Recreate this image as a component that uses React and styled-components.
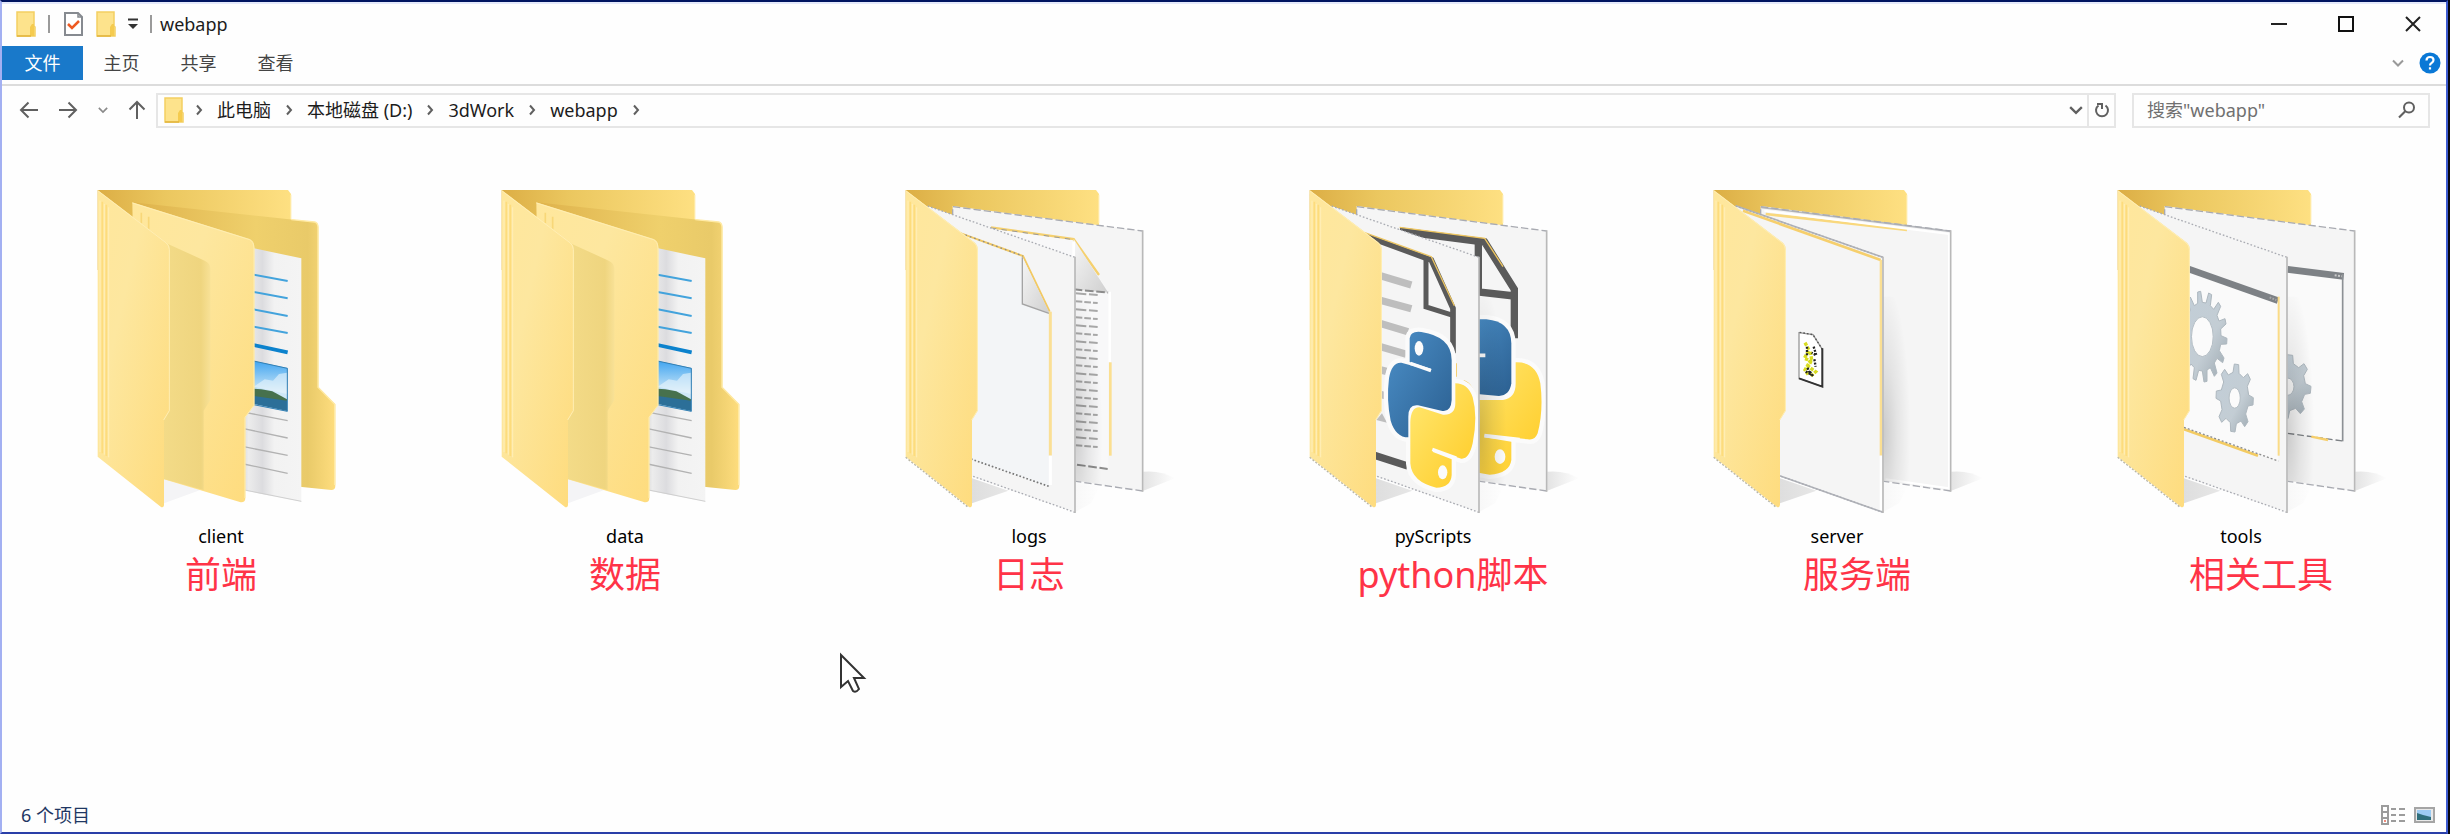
import React from "react";
import styled, { createGlobalStyle } from "styled-components";

const GlobalStyle = createGlobalStyle`
  * { box-sizing: border-box; }
  body { margin: 0; background: #fff; }
  body, button, input {
    font-family: "Noto Sans", "Noto Sans CJK SC", sans-serif;
    font-size: 18px;
    line-height: 24px;
    color: #1c1c1c;
  }
  button { border: 0; padding: 0; background: none; cursor: default; }
  a { color: inherit; text-decoration: none; }
  svg { display: block; flex: none; }
`;

const Desktop = styled.div`
  background: #05050f;
  padding-right: 2px;
`;

const Window = styled.main`
  position: relative;
  display: flex;
  flex-direction: column;
  min-height: 100vh;
  background: #fefefe;
  border-style: solid;
  border-width: 2px;
  border-color: #001460 #3d5bd0 #2a3fa8 #a3b0f2;
`;

const TitleBar = styled.header`
  display: flex;
  align-items: center;
  height: 44px;
  padding: 0 0 2px 14px;
  border-top: 2px solid #e4e9fb;
`;

const QuickTools = styled.div`
  display: flex;
  align-items: center;
  gap: 12px;
`;

const Separator = styled.span`
  width: 2px;
  height: 18px;
  margin-right: 2px;
  background: #9a9a9a;
`;

const Title = styled.h1`
  margin: 0 0 0 6px;
  font-size: 18px;
  font-weight: 400;
  line-height: 24px;
`;

const WindowButtons = styled.div`
  display: flex;
  margin-left: auto;
`;

const WindowButton = styled.button`
  display: flex;
  align-items: center;
  justify-content: center;
  width: 67px;
  height: 40px;
`;

const Ribbon = styled.nav`
  display: flex;
  align-items: center;
  height: 40px;
  padding-bottom: 4px;
  padding-right: 5px;
  border-bottom: 2px solid #dcdcdc;
`;

const Tab = styled.button`
  height: 34px;
  width: ${(p) => (p.$active ? 81 : 77)}px;
  color: ${(p) => (p.$active ? "#fff" : "#444")};
  background: ${(p) => (p.$active ? "#1979ca" : "transparent")};
`;

const RibbonTools = styled.div`
  display: flex;
  align-items: center;
  gap: 15px;
  margin-left: auto;
`;

const AddressRow = styled.div`
  display: flex;
  align-items: center;
  height: 48px;
  padding: 0 16px 0 17px;
`;

const Arrows = styled.div`
  display: flex;
  align-items: center;
  justify-content: space-between;
  width: 128px;
  margin-right: 9px;
`;

const AddressBox = styled.div`
  display: flex;
  flex: 1;
  align-items: center;
  height: 35px;
  padding-left: 6px;
  border: 2px solid #e6e6e6;
`;

const Crumbs = styled.ol`
  display: flex;
  align-items: center;
  flex: 1;
  gap: 12px;
  margin: 0;
  padding: 0 0 0 9px;
  list-style: none;
`;

const Crumb = styled.li`
  display: flex;
  align-items: center;
  gap: 12px;
`;

const RefreshButton = styled.button`
  display: flex;
  align-items: center;
  justify-content: center;
  width: 27px;
  height: 31px;
  margin-left: 4px;
  border-left: 2px solid #e6e6e6;
`;

const SearchBox = styled.label`
  display: flex;
  align-items: center;
  width: 298px;
  height: 35px;
  margin-left: 16px;
  padding: 0 12px 0 13px;
  border: 2px solid #e6e6e6;
`;

const SearchInput = styled.input`
  flex: 1;
  min-width: 0;
  padding: 0;
  border: 0;
  outline: 0;
  background: none;
  &::placeholder { color: #707070; opacity: 1; }
`;

const Files = styled.ul`
  display: grid;
  grid-template-columns: repeat(auto-fill, minmax(400px, 1fr));
  align-content: start;
  flex: 1;
  margin: 0;
  padding: 46px 3px 0 17px;
  list-style: none;
`;

const FileItem = styled.li`
  text-align: center;
`;

const FileLink = styled.a`
  display: flex;
  flex-direction: column;
  align-items: center;
  line-height: 22px;
  color: #000;
`;

const Note = styled.p`
  margin: 0;
  padding-left: ${(p) => (p.$aside ? 40 : 0)}px;
  font-size: 36px;
  line-height: 56px;
  color: #ff3347;
`;

const StatusBar = styled.footer`
  display: flex;
  align-items: center;
  justify-content: space-between;
  height: 34px;
  padding: 0 10px 0 19px;
  color: #1f3763;
`;

const ViewButtons = styled.div`
  display: flex;
  gap: 9px;
`;

const Pointer = styled.svg`
  position: absolute;
  left: 837px;
  top: 650px;
`;

const SmallFolder = () => (
  <svg width="20" height="26" viewBox="0 0 20 26">
    <path d="M1 1h17v14l1 1v9H1z" fill="#fde38c" stroke="#f3cf62" strokeWidth="1.5" />
    <path d="M14 25v-9l2-3h2v12z" fill="#f5cb4f" />
    <path d="M1 25h14" stroke="#e2b43c" strokeWidth="1.5" />
  </svg>
);

const CheckedPage = () => (
  <svg width="20" height="26" viewBox="0 0 20 26">
    <path d="M1 2h13l4 4v18H1z" fill="#fff" stroke="#868a90" strokeWidth="2" />
    <path d="M14 2v4h4" fill="none" stroke="#868a90" strokeWidth="1.5" />
    <path d="M4 13l4 4 7-7" fill="none" stroke="#ee5a22" strokeWidth="2.5" />
  </svg>
);

const Chevron = ({ dir = "right", color = "#606060", w = 2, size = 12 }) => (
  <svg width={size} height={size} viewBox="0 0 12 12">
    <path
      d={dir === "right" ? "M4 1.5l4 4.5-4 4.5" : "M1 3.5l5 5 5-5"}
      fill="none"
      stroke={color}
      strokeWidth={w}
    />
  </svg>
);

const Arrow = ({ turn = 0, color = "#606060" }) => (
  <svg width="20" height="20" viewBox="0 0 20 20">
    <path
      d="M19 10H2M9.500 2.500L2 10l7.500 7.500"
      fill="none"
      stroke={color}
      strokeWidth="2"
      transform={`rotate(${turn} 10 10)`}
    />
  </svg>
);

const Gradients = () => (
  <svg width="0" height="0" style={{ position: "absolute" }} aria-hidden="true">
    <defs>
      <linearGradient id="front" x1="0" y1="0" x2="1" y2="1">
        <stop offset="0" stopColor="#ffe79c" />
        <stop offset=".35" stopColor="#fde79f" />
        <stop offset="1" stopColor="#fedb7c" />
      </linearGradient>
      <linearGradient id="back" x1="0" y1="0" x2="1" y2="0">
        <stop offset="0" stopColor="#dcae45" />
        <stop offset=".35" stopColor="#ebc75f" />
        <stop offset="1" stopColor="#fee082" />
      </linearGradient>
      <linearGradient id="back2" gradientUnits="userSpaceOnUse" x1="200" y1="0" x2="797" y2="0">
        <stop offset="0" stopColor="#dfb34c" />
        <stop offset=".6" stopColor="#efd06c" />
        <stop offset=".86" stopColor="#e9ca69" />
        <stop offset="1" stopColor="#fedd7e" />
      </linearGradient>
      <linearGradient id="shade" x1="0" y1="0" x2="1" y2="0">
        <stop offset="0" stopColor="#f3db88" />
        <stop offset=".8" stopColor="#efd57f" />
        <stop offset="1" stopColor="#f8e196" />
      </linearGradient>
      <linearGradient id="sheet" x1="0" y1="0" x2="1" y2="0">
        <stop offset="0" stopColor="#d6d6d6" />
        <stop offset=".12" stopColor="#ececec" />
        <stop offset=".35" stopColor="#dcdcdf" />
        <stop offset=".55" stopColor="#f2f2f2" />
        <stop offset="1" stopColor="#f4f4f4" />
      </linearGradient>
      <linearGradient id="fall" x1="0" y1="0" x2="1" y2="0">
        <stop offset="0" stopColor="#c9c9c9" />
        <stop offset="1" stopColor="#c9c9c9" stopOpacity="0" />
      </linearGradient>
      <radialGradient id="crease" cx="0" cy=".72" r=".8">
        <stop offset="0" stopColor="#000" stopOpacity=".17" />
        <stop offset=".5" stopColor="#000" stopOpacity=".07" />
        <stop offset="1" stopColor="#000" stopOpacity="0" />
      </radialGradient>
      <linearGradient id="curl" x1="0" y1="0" x2="1" y2="1">
        <stop offset="0" stopColor="#f6f6f6" />
        <stop offset="1" stopColor="#cfcfcf" />
      </linearGradient>
      <linearGradient id="sky" x1="0" y1="0" x2="0" y2="1">
        <stop offset="0" stopColor="#3fa4f0" />
        <stop offset=".6" stopColor="#cfe8f7" />
      </linearGradient>
      <linearGradient id="pyBlue" x1="0" y1="0" x2="1" y2="1">
        <stop offset="0" stopColor="#4b8fc8" />
        <stop offset="1" stopColor="#2b5f90" />
      </linearGradient>
      <linearGradient id="pyYellow" x1="0" y1="0" x2="1" y2="1">
        <stop offset="0" stopColor="#ffe873" />
        <stop offset="1" stopColor="#ffcb25" />
      </linearGradient>
      <linearGradient id="gear" x1="0" y1="0" x2="1" y2="1">
        <stop offset="0" stopColor="#c2ced8" />
        <stop offset=".6" stopColor="#c3cdd4" />
        <stop offset="1" stopColor="#9aa6ae" />
      </linearGradient>
    </defs>
  </svg>
);

const FrontCover = () => (
  <g>
    <path
      d="M84 60L290 217q10 8 10 20V722L283 750V1004q0 8-8 8L84 860z"
      fill="url(#front)"
    />
    <path d="M84 62L290 219q9 8 9 20V722L282 750" fill="none" stroke="#ffeeb4" strokeWidth="3" />
    <path d="M98 95V850M110 104V858" stroke="#fddc7c" strokeWidth="5" />
    <path d="M91 92V846M104 102V854M117 112V862" stroke="#ffefb8" strokeWidth="3" />
  </g>
);

const BackCover = () => (
  <g>
    <path d="M84 60H655L664 72V300H84z" fill="url(#back)" />
    <path d="M663 74V160" stroke="#ffe9a2" strokeWidth="4" />
  </g>
);

const FilledFolder = () => (
  <g>
    <BackCover />
    <path d="M188 97L735 156q11 3 11 16V652L797 703V948q0 12-12 12L690 950L300 880z" fill="url(#back2)" />
    <path d="M665 149L735 156q10 3 10 16V652L795 703V945" fill="none" stroke="#ffeaa4" strokeWidth="4" />
    <path d="M540 232L695 265V995L515 960z" fill="url(#sheet)" />
    <path d="M525 960L695 994" stroke="#cfcfcf" strokeWidth="3" />
    <path d="M552 314L654 333M552 366L654 385M552 418L654 438M552 470L654 489" stroke="#43a3dc" strokeWidth="6" />
    <path d="M552 525L654 547" stroke="#0c82cd" strokeWidth="11" />
    <path d="M530 728L654 752M522 776L654 804M522 830L654 856M522 882L654 910" stroke="#b2b2b2" strokeWidth="4" />
    <path d="M550 572L654 594V725L550 704z" fill="url(#sky)" />
    <path d="M552 650L585 628L610 632L628 612L652 608V672z" fill="#eaf5fb" opacity=".6" />
    <path d="M552 656L575 658L608 664L652 688V700H552z" fill="#47714d" />
    <path d="M552 678L652 692V723L552 702z" fill="#2c6f98" />
    <path d="M552 573L653 595V724L552 704" fill="none" stroke="#337fb2" strokeWidth="3" />
    <path d="M283 920L392 960L283 1000z" fill="#f4f4f6" />
    <path d="M188 97L540 207q14 5 14 25V706L527 742V984q0 14-14 13L270 924L200 800z" fill="url(#front)" />
    <path d="M188 99L540 209q12 5 13 25V706L526 742V984" fill="none" stroke="#ffeeb2" strokeWidth="3" />
    <path d="M215 128V160M237 140V180" stroke="#f8d778" strokeWidth="5" />
    <path d="M280 215L405 272q17 8 17 24V690L402 722V960L280 926z" fill="url(#shade)" />
    <FrontCover />
  </g>
);

const Leaf = ({ front, children }) => (
  <g>
    <path
      d={front ? "M150 108L592 262V1027L180 885z" : "M225 108L795 183V963L400 906V300L225 240z"}
      fill="#f5f5f5"
    />
    {children}
    <path
      d={front ? "M150 108L592 262M592 1027L270 913" : "M225 140V110L795 183M795 963L594 934"}
      fill="none"
      stroke="#a9abb2"
      strokeWidth="4"
      strokeDasharray={front ? "5 6" : "22 9"}
    />
    <path d={front ? "M592 260V1029" : "M795 181V965"} stroke="#b9b9b9" strokeWidth="5" />
  </g>
);

const LeafFolder = ({ rear, front, edge }) => (
  <g>
    <path d="M797 905Q850 900 892 925L797 962z" fill="url(#fall)" opacity=".5" />
    <path d="M594 940H670L640 1000L594 1025zM283 925L392 962L283 1000z" fill="url(#fall)" opacity=".6" />
    <BackCover />
    <Leaf>{rear}</Leaf>
    <path d="M594 380H694V946L594 932z" fill="url(#crease)" />
    <Leaf front>{front}</Leaf>
    {edge}
    <FrontCover />
    <path d="M84 862L272 1012" stroke="#b9b6a5" strokeWidth="4" strokeDasharray="6 5" />
  </g>
);

const textRows = Array.from({ length: 20 }, (_, i) => 370 + i * 24);

const LogsFolder = () => (
  <LeafFolder
    rear={
      <g>
        <path d="M340 172L588 207L692 365V897L590 884z" fill="#f8f8f9" />
        <path d="M340 172L588 207L664 315" fill="none" stroke="#f5d06e" strokeWidth="7" />
        <path d="M340 174L588 209" stroke="#9a9a9a" strokeWidth="3" strokeDasharray="16 16" />
        <path d="M588 207V358L692 368z" fill="url(#curl)" />
        <path d="M588 358L692 368M598 884L690 897" stroke="#8c8c8c" strokeWidth="6" strokeDasharray="26 8" />
        <path d="M588 215V355M696 365V577" stroke="#fff" strokeWidth="8" />
        <path d="M698 577V857" stroke="#fbdf90" strokeWidth="8" />
        {textRows.map((y, i) => (
          <path key={y} d={`M594 ${y}L660 ${y + 5}`} stroke="#a8a8a8" strokeWidth="6" strokeDasharray={i % 2 ? "20 6" : "32 8"} />
        ))}
      </g>
    }
    front={
      <g>
        <path d="M250 190L436 258L516 425V950L270 864z" fill="#f3f5f7" />
        <path d="M250 190L436 258L516 425" fill="none" stroke="#f2c963" strokeWidth="6" />
        <path d="M250 190L436 258" stroke="#8b8b8b" strokeWidth="4" strokeDasharray="5 9" />
        <path d="M434 260V402L516 430z" fill="url(#curl)" />
        <path d="M434 262V402L514 430" fill="none" stroke="#a4a4a4" strokeWidth="4" />
        <path d="M518 425V857" stroke="#fadf95" strokeWidth="9" />
        <path d="M518 857V945" stroke="#fff" strokeWidth="9" />
        <path d="M280 867L516 950" stroke="#777" strokeWidth="5" strokeDasharray="5 6" />
      </g>
    }
  />
);

const PY_BLUE =
  "M360 505Q362 482 395 486Q486 500 486 570V690Q484 728 455 722L385 706Q356 702 356 740V802Q318 802 303 752Q290 690 298 625Q306 576 335 578L424 602V596L360 576z";
const PY_YELLOW =
  "M497 640Q535 640 549 682Q565 740 549 820Q538 868 515 866L430 838V846L486 868V915Q484 952 440 953Q366 936 362 880V756Q364 710 390 712L460 734Q497 736 497 700z";
const PY_BLUE_REAR = "M520 448H590Q664 455 665 520V640Q660 676 628 678L520 668z";
const PY_YELLOW_REAR =
  "M678 577Q740 575 752 640Q762 720 744 790Q735 812 715 808L585 794V802L665 815V870Q660 910 600 914L520 900V690H640Q678 685 678 640z";

const PythonMark = () => (
  <g strokeLinejoin="round">
    <g fill="#fbfbfb" stroke="#fbfbfb" strokeWidth="26">
      <path d={PY_BLUE} />
      <path d={PY_YELLOW} />
    </g>
    <path d={PY_BLUE} fill="url(#pyBlue)" />
    <path d={PY_YELLOW} fill="url(#pyYellow)" />
    <path d="M362 580L424 602" stroke="#fbfbfb" strokeWidth="10" />
    <path d="M428 838L500 864" stroke="#fbfbfb" strokeWidth="10" />
    <ellipse cx="388" cy="535" rx="13" ry="22" fill="#fbfbfb" />
    <ellipse cx="459" cy="907" rx="14" ry="21" fill="#fbfbfb" />
  </g>
);

const PythonFolder = () => (
  <LeafFolder
    rear={
      <g transform="translate(24 0)">
        <path d="M330 183L585 216L674 358V505" fill="none" stroke="#5a5a5a" strokeWidth="22" />
        <path d="M330 172L585 205L640 290" fill="none" stroke="#f0c75f" strokeWidth="4" />
        <path d="M566 215V366L674 378" fill="none" stroke="#5a5a5a" strokeWidth="22" />
        <g strokeLinejoin="round">
          <g fill="#fbfbfb" stroke="#fbfbfb" strokeWidth="26">
            <path d={PY_BLUE_REAR} />
            <path d={PY_YELLOW_REAR} />
          </g>
          <path d={PY_BLUE_REAR} fill="url(#pyBlue)" />
          <path d={PY_YELLOW_REAR} fill="url(#pyYellow)" />
        </g>
        <path d="M560 556H587M584 797L690 809" stroke="#fbfbfb" strokeWidth="11" />
        <ellipse cx="631" cy="860" rx="16" ry="22" fill="#fbfbfb" />
      </g>
    }
    front={
      <g transform="translate(24 0)">
        <path d="M225 197L425 270L490 415V550" fill="none" stroke="#5a5a5a" strokeWidth="17" />
        <path d="M225 188L425 260L494 407" fill="none" stroke="#ecc562" strokeWidth="4" />
        <path d="M409 265V411L490 436" fill="none" stroke="#5a5a5a" strokeWidth="15" />
        <path d="M255 312L365 345M255 386L365 416M255 455L355 485M255 525L350 553M255 595L290 604M255 668L290 678" stroke="#bebebe" strokeWidth="22" />
        <path d="M260 750L277 730L292 758z" fill="#bebebe" />
        <path d="M240 851L354 888" stroke="#5a5a5a" strokeWidth="22" />
        <path d="M500 580V620M522 632Q548 640 560 690" fill="none" stroke="#f4d073" strokeWidth="4" />
        <PythonMark />
      </g>
    }
  />
);

const ServerFolder = () => (
  <LeafFolder
    rear={
      <g>
        <path d="M240 132L664 180" stroke="#f9d87d" strokeWidth="8" />
        <path d="M236 122L790 192V955L600 928" fill="none" stroke="#fff" strokeWidth="6" />
        <path d="M225 112L795 184" stroke="#b6b8bd" strokeWidth="5" />
      </g>
    }
    front={
      <g transform="translate(12 0)">
        <path d="M160 122L573 270" stroke="#f6cf6c" strokeWidth="8" />
        <path d="M574 270V857" stroke="#fbdf92" strokeWidth="8" />
        <path d="M574 857V1020" stroke="#fff" strokeWidth="8" />
        <path d="M138 107L580 262M270 917L580 1027" stroke="#b2b4ba" strokeWidth="5" />
        <path d="M328 488L370 494L398 538V650L328 625z" fill="#fff" stroke="#9a9a9a" strokeWidth="4" />
        <path d="M330 487L370 494L398 538" fill="none" stroke="#555" strokeWidth="4" strokeDasharray="5 6" />
        <path d="M398 535V650L328 625" fill="none" stroke="#333" strokeWidth="6" />
        <path d="M346 518L358 540L344 565L362 572L346 600L356 615M362 545L366 570L356 590L378 605L362 620" fill="none" stroke="#d8dc20" strokeWidth="10" strokeDasharray="10 4" />
        <path d="M372 530L380 556L366 548M374 568L378 590M348 605L362 612L352 590M370 618L360 604M352 530V560" fill="none" stroke="#222" strokeWidth="7" strokeDasharray="6 4" />
      </g>
    }
  />
);

const gearPath = (cx, cy, rx, ry, teeth) => {
  const point = (a, k) => `${Math.round(cx + Math.cos(a) * rx * k)} ${Math.round(cy + Math.sin(a) * ry * k)}`;
  const step = (Math.PI * 2) / teeth;
  const parts = [];
  for (let i = 0; i < teeth; i += 1) {
    const a = i * step + 0.1;
    parts.push(point(a - step * 0.28, 0.76), point(a - step * 0.14, 1), point(a + step * 0.14, 1), point(a + step * 0.28, 0.76));
  }
  return `M${parts.join("L")}z`;
};

const Gear = ({ cx, cy, rx, ry, teeth, hole }) => (
  <g>
    <path d={gearPath(cx, cy, rx, ry, teeth)} fill="url(#gear)" stroke="#aeb8bf" strokeWidth="3" strokeLinejoin="round" />
    <ellipse cx={cx} cy={cy} rx={rx * hole} ry={ry * hole} fill="#fbfbfb" stroke="#b4bec5" strokeWidth="3" />
  </g>
);

const ToolsFolder = () => (
  <LeafFolder
    rear={
      <g>
        <path d="M500 280L760 310V814L500 780z" fill="#fafafa" />
        <path d="M594 298L762 319" stroke="#7d8185" strokeWidth="20" />
        <path d="M735 316L757 319" stroke="#c9c9c9" strokeWidth="6" strokeDasharray="6 4" />
        <path d="M759 312V814" stroke="#8c9094" strokeWidth="5" />
        <path d="M594 790L759 813" stroke="#7d8185" strokeWidth="4" strokeDasharray="20 9" />
        <path d="M665 800L715 810" stroke="#f6cf6c" strokeWidth="7" />
        <Gear cx={594} cy={650} rx={70} ry={96} teeth={8} hole={0.27} />
      </g>
    }
    front={
      <g>
        <path d="M260 285L566 385V872L260 770z" fill="#fafafa" />
        <path d="M285 293L565 392" stroke="#7d8185" strokeWidth="20" />
        <path d="M540 382L560 390" stroke="#a9a9a9" strokeWidth="6" strokeDasharray="5 4" />
        <path d="M567 380V857" stroke="#fadb86" strokeWidth="6" />
        <path d="M283 778L505 857" stroke="#f3cb62" strokeWidth="8" />
        <path d="M283 772L566 873" stroke="#8d8d8d" strokeWidth="4" strokeDasharray="6 6" />
        <Gear cx={338} cy={500} rx={74} ry={136} teeth={14} hole={0.44} />
        <Gear cx={435} cy={684} rx={56} ry={102} teeth={8} hole={0.3} />
      </g>
    }
  />
);

const folders = [
  { name: "client", note: "前端", Art: FilledFolder },
  { name: "data", note: "数据", Art: FilledFolder },
  { name: "logs", note: "日志", Art: LogsFolder },
  { name: "pyScripts", note: "python脚本", Art: PythonFolder, aside: true },
  { name: "server", note: "服务端", Art: ServerFolder, aside: true },
  { name: "tools", note: "相关工具", Art: ToolsFolder, aside: true },
];

const path = ["此电脑", "本地磁盘 (D:)", "3dWork", "webapp"];

export default function App() {
  return (
    <Desktop>
      <GlobalStyle />
      <Gradients />
      <Window>
        <TitleBar>
          <QuickTools>
            <SmallFolder />
            <Separator />
            <button aria-label="属性"><CheckedPage /></button>
            <button aria-label="新建文件夹"><SmallFolder /></button>
            <button aria-label="自定义快速访问工具栏">
              <svg width="10" height="12" viewBox="0 0 10 12">
                <path d="M0 1.500H10" stroke="#333" strokeWidth="2" />
                <path d="M0 6H10L5 11z" fill="#333" />
              </svg>
            </button>
            <Separator />
          </QuickTools>
          <Title>webapp</Title>
          <WindowButtons>
            <WindowButton aria-label="最小化">
              <svg width="16" height="16"><path d="M0 8H16" stroke="#222" strokeWidth="2" /></svg>
            </WindowButton>
            <WindowButton aria-label="最大化">
              <svg width="16" height="16"><path d="M1 1H15V15H1z" fill="none" stroke="#111" strokeWidth="2" /></svg>
            </WindowButton>
            <WindowButton aria-label="关闭">
              <svg width="16" height="16"><path d="M1 1L15 15M15 1L1 15" stroke="#222" strokeWidth="2" /></svg>
            </WindowButton>
          </WindowButtons>
        </TitleBar>

        <Ribbon>
          <Tab $active>文件</Tab>
          <Tab>主页</Tab>
          <Tab>共享</Tab>
          <Tab>查看</Tab>
          <RibbonTools>
            <button aria-label="展开功能区"><Chevron dir="down" color="#9a9a9a" /></button>
            <button aria-label="帮助">
              <svg width="22" height="22" viewBox="0 0 22 22">
                <circle cx="11" cy="11" r="10.500" fill="#0a78d6" />
                <path d="M7.500 8.500q0-3.500 3.500-3.500t3.500 3q0 1.600-1.800 2.800-1.700 1.100-1.700 2.700M11 15.200v2.300" fill="none" stroke="#fff" strokeWidth="2.200" />
              </svg>
            </button>
          </RibbonTools>
        </Ribbon>

        <AddressRow>
          <Arrows>
            <button aria-label="后退"><Arrow /></button>
            <button aria-label="前进"><Arrow turn={180} /></button>
            <button aria-label="最近浏览的位置"><Chevron dir="down" color="#8a8a8a" size={10} /></button>
            <button aria-label="上移"><Arrow turn={90} /></button>
          </Arrows>
          <AddressBox>
            <SmallFolder />
            <Crumbs>
              <li><Chevron /></li>
              {path.map((part) => (
                <Crumb key={part}>
                  <a href="#">{part}</a>
                  <Chevron />
                </Crumb>
              ))}
            </Crumbs>
            <button aria-label="以前的位置"><Chevron dir="down" size={14} /></button>
            <RefreshButton aria-label="刷新">
              <svg width="16" height="18" viewBox="0 0 16 18">
                <path d="M11.500 4.500A6 6 0 1 1 4.500 4.500M3 3H8V8" fill="none" stroke="#606060" strokeWidth="2" />
              </svg>
            </RefreshButton>
          </AddressBox>
          <SearchBox>
            <SearchInput type="text" aria-label="搜索" placeholder={'搜索"webapp"'} />
            <svg width="18" height="18" viewBox="0 0 18 18">
              <circle cx="11" cy="6.500" r="5" fill="none" stroke="#606060" strokeWidth="2" />
              <path d="M7.500 10L1 16.500" stroke="#606060" strokeWidth="2.200" />
            </svg>
          </SearchBox>
        </AddressRow>

        <Files>
          {folders.map(({ name, note, Art, aside }) => (
            <FileItem key={name}>
              <FileLink href="#">
                <svg width="300" height="345" viewBox="4 30 900 1035" aria-hidden="true"><Art /></svg>
                {name}
              </FileLink>
              <Note $aside={aside}>{note}</Note>
            </FileItem>
          ))}
        </Files>

        <StatusBar>
          <span>6 个项目</span>
          <ViewButtons>
            <button aria-label="详细信息">
              <svg width="24" height="20" viewBox="0 0 24 20">
                <path d="M1 1H7V19H1zM1 7H7M1 13H7" fill="#fff" stroke="#9c9c9c" strokeWidth="2" />
                <path d="M10 4H15M18 4H24M10 10H15M18 10H24M10 16H15M18 16H24" stroke="#9c9c9c" strokeWidth="2" />
                <path d="M3 16H5" stroke="#ef8a7a" strokeWidth="2" />
              </svg>
            </button>
            <button aria-label="大缩略图">
              <svg width="22" height="18" viewBox="0 0 22 18">
                <path d="M1 2H20V16H1z" fill="#e8e8e8" stroke="#a5a5a5" strokeWidth="2" />
                <path d="M3 4H17V14H3z" fill="#9ccbf3" />
                <path d="M3 7L9 9L17 11V14H3z" fill="#2f6f7c" />
              </svg>
            </button>
          </ViewButtons>
        </StatusBar>

        <Pointer width="30" height="42" viewBox="0 0 30 42" aria-hidden="true">
          <path d="M2 3V35L9 29L14 39Q17 41 20 37L15 26H25z" fill="#fff" stroke="#333" strokeWidth="2" />
        </Pointer>
      </Window>
    </Desktop>
  );
}
